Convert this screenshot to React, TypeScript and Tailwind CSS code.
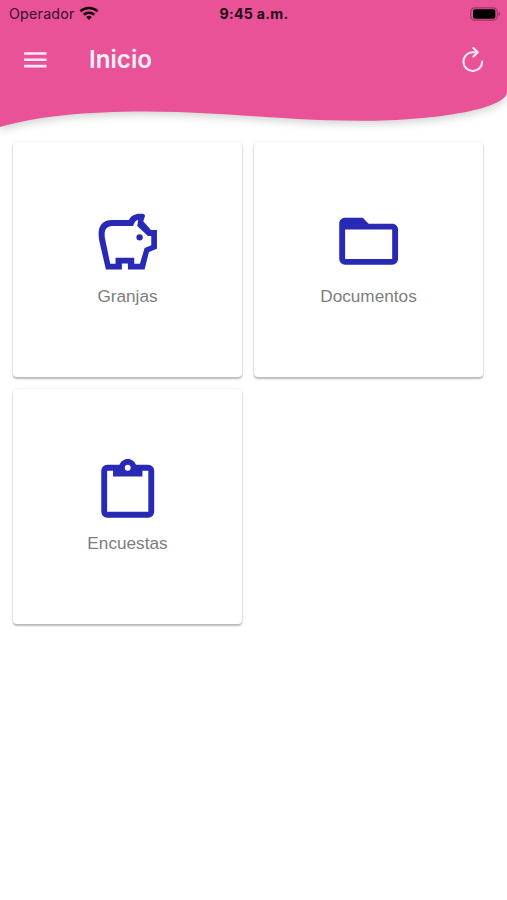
import type { ReactNode } from "react";

function Header() {
  return (
    <header className="relative h-[142px] w-full">
      <svg
        className="absolute inset-0 drop-shadow-[0_3px_4px_rgba(0,0,0,0.18)]"
        width="507"
        height="142"
        viewBox="0 0 507 142"
        fill="#ea5297"
      >
        <path d="M-10 -10H517V92H507C507 108 440 120.8 360 120.8C280 120.8 225 111.4 145 111.4C85 111.4 38 116 0 127H-10Z" />
      </svg>
      <div className="relative">
        <div className="flex h-[27px] items-center justify-between pr-[6px] pl-[9px] text-[#35102a]">
          <div className="flex w-[120px] items-center gap-[4px]">
            <span className="text-[14.2px] tracking-[0.25px]">Operador</span>
            <svg width="20" height="15" viewBox="0 0 20 15" fill="none" stroke="#16050f" strokeWidth="2.6">
              <path d="M1.4 5.4C6.2 .9 13.8 .9 18.6 5.4" />
              <path d="M4.7 8.8C7.7 6 12.3 6 15.3 8.8" />
              <path d="M7.2 10.9Q10 8.7 12.8 10.9L10 13.9Z" fill="#16050f" stroke="none" />
            </svg>
          </div>
          <span className="-ml-[2px] text-[14.2px] font-bold tracking-[0.25px] text-[#210817]">9:45 a.m.</span>
          <div className="flex w-[120px] justify-end">
            <svg width="31" height="14" viewBox="0 0 31 14">
              <rect x=".8" y=".8" width="26.4" height="12.4" rx="3.8" fill="none" stroke="#9d3469" strokeWidth="1.2" />
              <rect x="3" y="2.2" width="22.4" height="9.6" rx="1.8" fill="#000" />
              <path d="M28.5 4.8C30.8 5.6 30.8 8.4 28.5 9.2Z" fill="#9d3469" />
            </svg>
          </div>
        </div>
        <div className="flex h-[66px] items-center pr-[23px] pl-[24px]">
          <svg width="23" height="16" viewBox="0 0 23 16" fill="#ffe8f5">
            <path d="M0 .2H22.5V2.8H0ZM0 6.5H22.5V9.1H0ZM0 12.8H22.5V15.4H0Z" />
          </svg>
          <h1 className="ml-[42px] text-[24.2px] leading-none font-[560] text-[#fff0f8]">Inicio</h1>
          <svg
            className="ml-auto"
            width="22"
            height="26"
            viewBox="0 0 22 26"
            fill="none"
            stroke="#ffe8f5"
            strokeWidth="2.1"
            strokeLinecap="round"
            strokeLinejoin="round"
          >
            <path d="M20.2 14.6A9.4 9.4 0 1 1 10.8 5.2H15.4" />
            <path d="M11.4 1L15.8 5.2L11.4 9.6" />
          </svg>
        </div>
      </div>
    </header>
  );
}

function Card({ label, children }: { label: string; children: ReactNode }) {
  return (
    <section className="flex h-[235px] w-[229px] flex-col items-center rounded-[4px] bg-white pt-[64px] shadow-[0_2px_2px_rgba(0,0,0,0.26),0_0_3px_rgba(0,0,0,0.1)]">
      <svg
        className="overflow-visible"
        width="70.6"
        height="70.6"
        viewBox="0 0 24 24"
        fill="#2829b5"
        fillRule="evenodd"
      >
        {children}
      </svg>
      <span className="mt-[7px] font-['Liberation_Sans',sans-serif] text-[17.2px] leading-[24px] text-[#7d7d7d]">
        {label}
      </span>
    </section>
  );
}

export default function App() {
  return (
    <div className="h-[900px] w-[507px] overflow-hidden bg-white font-['Inter','Liberation_Sans',sans-serif]">
      <Header />
      <main className="grid grid-cols-[229px_229px] gap-x-[12px] gap-y-[12px] pl-[13px]">
        <Card label="Granjas">
          <g transform="translate(-4.25 -2.05) scale(.1135)">
            <path d="M79 208L60 126C57 110 56 98 59 86C64 69 78 60 96 60H148C153 48 166 41 180 41H188C194 41 197 45 196 49L191 64L214 90H232V146L208 156L195 208H145V190H127V208ZM92 191H108V173H164V191H181L195 144L215 136V108H205L173 78L176 60C168 61 165 66 161 78H98C79 79 73 91 76 113Z" />
            <circle cx="180" cy="112" r="9.5" />
          </g>
        </Card>
        <Card label="Documentos">
          <path
            transform="translate(.12 0)"
            d="M20 18H4V8H20M20 6H12L10 4H4C2.89 4 2 4.89 2 6V18A2 2 0 0 0 4 20H20A2 2 0 0 0 22 18V8C22 6.89 21.1 6 20 6Z"
          />
        </Card>
        <Card label="Encuestas">
          <path
            transform="translate(.15 1)"
            d="M19 3H14.82C14.4 1.84 13.3 1 12 1S9.6 1.84 9.18 3H5A2 2 0 0 0 3 5V19A2 2 0 0 0 5 21H19A2 2 0 0 0 21 19V5A2 2 0 0 0 19 3M12 3A1 1 0 0 1 13 4A1 1 0 0 1 12 5A1 1 0 0 1 11 4A1 1 0 0 1 12 3M7 7H17V5H19V19H5V5H7V7Z"
          />
        </Card>
      </main>
    </div>
  );
}
